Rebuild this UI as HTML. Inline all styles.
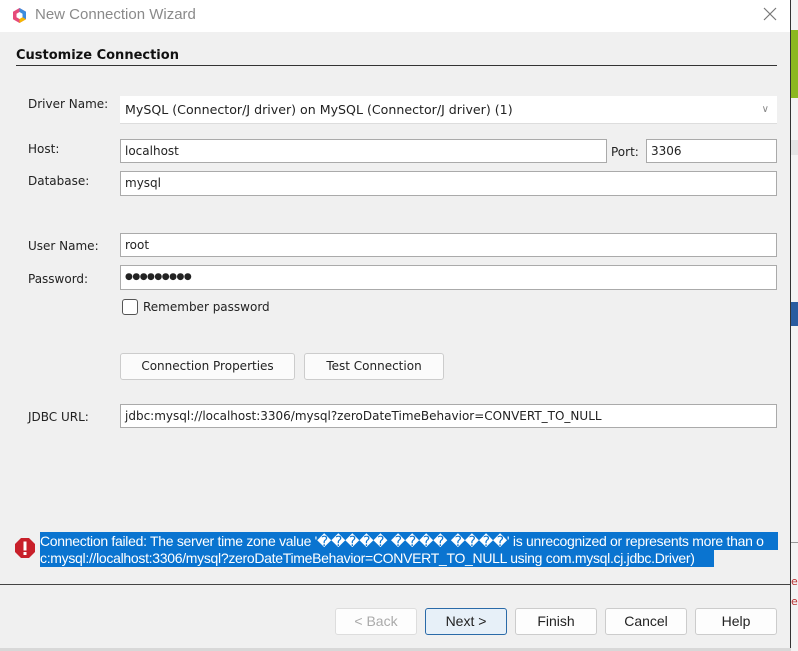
<!DOCTYPE html>
<html><head><style>
*{margin:0;padding:0;box-sizing:border-box}
body{width:798px;height:651px;position:relative;overflow:hidden;background:#f0f0f0;font-family:"DejaVu Sans","Liberation Sans",sans-serif;font-size:12px;color:#222}
.a{position:absolute}
.f{position:absolute;background:#fff;border:1px solid #aaa;padding-left:4px;line-height:22px;font-size:12px}
.l{position:absolute;font-size:12px;left:28px}
.b{position:absolute;background:#fbfbfb;border:1px solid #ccc;border-radius:3px;text-align:center;line-height:25px;font-size:12px}
.bb{position:absolute;background:#fdfdfd;border:1px solid #ccc;border-radius:3px;text-align:center;line-height:25px;font-family:"Liberation Sans",sans-serif;font-size:14px}
</style></head><body>
<div class="a" style="left:0;top:0;width:791px;height:32px;background:#fff"></div>
<svg class="a" style="left:11px;top:7px" width="17" height="17" viewBox="0 0 17 17"><polygon points="8.5,1 15,4.7 15,12.3 8.5,16 2,12.3 2,4.7" fill="#e64a7a"/><polygon points="8.5,1 15,4.7 15,12.3 8.5,8.5" fill="#3c8dde"/><polygon points="8.5,8.5 15,12.3 8.5,16" fill="#f5b800"/><polygon points="8.5,5 11.5,6.7 11.5,10.3 8.5,12 5.5,10.3 5.5,6.7" fill="#fff"/></svg>
<div class="a" style="left:35px;top:6px;font-family:'Liberation Sans',sans-serif;font-size:15px;color:#8a8a8a">New Connection Wizard</div>
<svg class="a" style="left:763px;top:7px" width="14" height="14" viewBox="0 0 14 14"><path d="M1 1L13 13M13 1L1 13" stroke="#777" stroke-width="1.2"/></svg>
<div class="a" style="left:16px;top:48px;font-weight:bold;font-size:13px;color:#111">Customize Connection</div>
<div class="a" style="left:16px;top:65px;width:761px;height:1px;background:#333"></div>
<div class="l" style="top:97px">Driver Name:</div>
<div class="a" style="left:120px;top:96px;width:657px;height:28px;background:#fff;border-bottom:1px solid #ddd;line-height:28px;padding-left:5px;font-size:12.6px">MySQL (Connector/J driver) on MySQL (Connector/J driver) (1)<span style="position:absolute;right:8px;color:#888;font-size:10px">∨</span></div>
<div class="l" style="top:142px">Host:</div>
<div class="f" style="left:120px;top:139px;width:487px;height:24px">localhost</div>
<div class="a" style="left:611px;top:145px;font-size:12px">Port:</div>
<div class="f" style="left:646px;top:139px;width:131px;height:24px">3306</div>
<div class="l" style="top:174px">Database:</div>
<div class="f" style="left:120px;top:171px;width:657px;height:25px">mysql</div>
<div class="l" style="top:239px">User Name:</div>
<div class="f" style="left:120px;top:233px;width:657px;height:24px">root</div>
<div class="l" style="top:272px">Password:</div>
<div class="f" style="left:120px;top:265px;width:657px;height:25px;letter-spacing:-0.5px;font-size:9px">●●●●●●●●●</div>
<div class="a" style="left:122px;top:299px;width:16px;height:16px;border:1px solid #555;border-radius:3px;background:#fff"></div>
<div class="a" style="left:143px;top:300px">Remember password</div>
<div class="b" style="left:120px;top:353px;width:175px;height:27px">Connection Properties</div>
<div class="b" style="left:304px;top:353px;width:140px;height:27px">Test Connection</div>
<div class="l" style="top:410px">JDBC URL:</div>
<div class="f" style="left:120px;top:404px;width:657px;height:24px;font-size:12px">jdbc:mysql://localhost:3306/mysql?zeroDateTimeBehavior=CONVERT_TO_NULL</div>
<svg class="a" style="left:14px;top:537px" width="22" height="22" viewBox="0 0 22 22"><polygon points="7,1 15,1 21,7 21,15 15,21 7,21 1,15 1,7" fill="#c8202a"/><rect x="9.5" y="4.5" width="3" height="9" fill="#fff"/><rect x="9.5" y="15" width="3" height="3" fill="#fff"/></svg>
<div class="a" style="left:40px;top:532px;width:738px;height:18px;background:#0a74d0;color:#fff;font-family:'Liberation Sans',sans-serif;font-size:14px;line-height:18px;white-space:nowrap;overflow:hidden;letter-spacing:-0.3px">Connection failed: The server time zone value '����� ���� ����' is unrecognized or represents more than o</div>
<div class="a" style="left:40px;top:550px;width:674px;height:17px;background:#0a74d0;color:#fff;font-family:'Liberation Sans',sans-serif;font-size:14px;line-height:17px;white-space:nowrap;overflow:hidden;letter-spacing:-0.3px">c:mysql://localhost:3306/mysql?zeroDateTimeBehavior=CONVERT_TO_NULL using com.mysql.cj.jdbc.Driver)</div>
<div class="a" style="left:0;top:584px;width:791px;height:1px;background:#444"></div>
<div class="bb" style="left:335px;top:608px;width:82px;height:27px;color:#aaa;border-color:#ddd">&lt; Back</div>
<div class="bb" style="left:425px;top:608px;width:82px;height:27px;border-color:#2a6aa8;background:#e7f0f8">Next &gt;</div>
<div class="bb" style="left:515px;top:608px;width:82px;height:27px">Finish</div>
<div class="bb" style="left:605px;top:608px;width:82px;height:27px">Cancel</div>
<div class="bb" style="left:695px;top:608px;width:82px;height:27px">Help</div>
<div class="a" style="left:790px;top:0;width:1px;height:648px;background:#333"></div>
<div class="a" style="left:0;top:648px;width:791px;height:3px;background:#d8d8d8"></div>
<div class="a" style="left:791px;top:0;width:7px;height:651px;background:#f3f3f3"></div>
<div class="a" style="left:791px;top:30px;width:7px;height:68px;background:#8cb820"></div>
<div class="a" style="left:791px;top:140px;width:7px;height:15px;background:#e4e4e4"></div>
<div class="a" style="left:791px;top:302px;width:7px;height:24px;background:#2a5ca0"></div>
<div class="a" style="left:791px;top:542px;width:7px;height:1px;background:#999"></div>
<div class="a" style="left:791px;top:575px;color:#b33;font-size:11px">e</div>
<div class="a" style="left:791px;top:595px;color:#b33;font-size:11px">e</div>
</body></html>
